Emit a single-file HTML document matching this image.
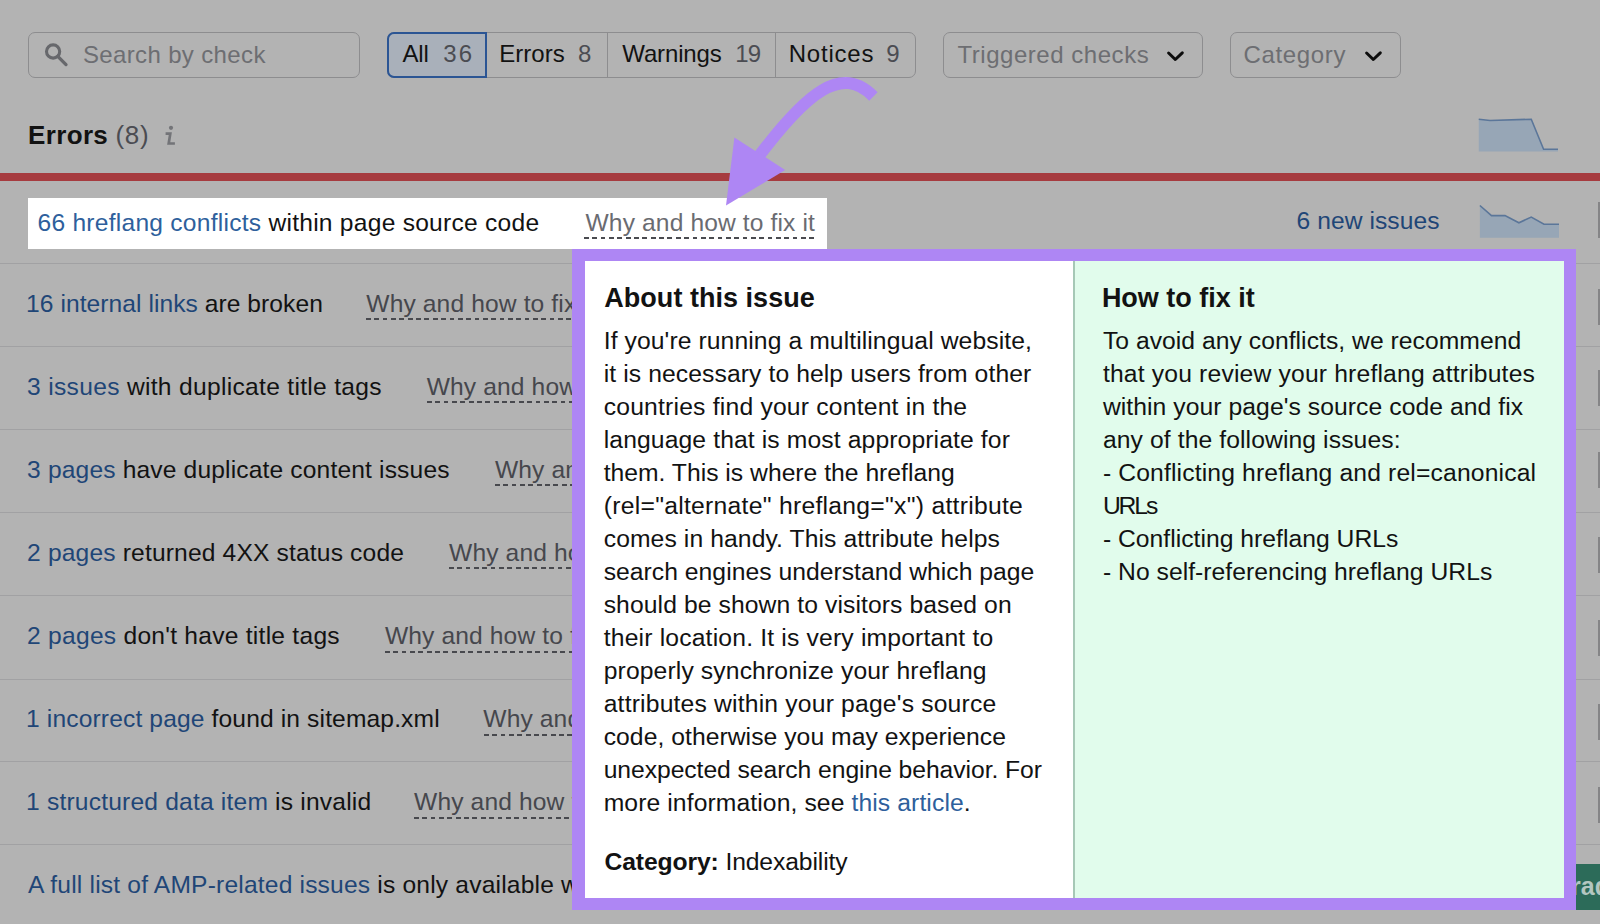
<!DOCTYPE html>
<html><head><meta charset="utf-8">
<style>
*{margin:0;padding:0;box-sizing:border-box}
html,body{width:1600px;height:924px;overflow:hidden;background:#b3b3b3;font-family:"Liberation Sans",sans-serif;color:#121212}
.abs{position:absolute}
.tx{position:absolute;white-space:nowrap;z-index:1}
.tp{z-index:6}
.box{position:absolute;border:1px solid #8d8d8f;border-radius:7px}
.sep{position:absolute;left:0;width:1600px;height:1px;background:#a1a1a3}
.dash{position:absolute;height:2px;background:repeating-linear-gradient(90deg,#48494e 0 4.75px,transparent 4.75px 8.35px)}
.pop{position:absolute;left:572px;top:249px;width:1004px;height:661px;background:#ae86f4;z-index:5}
.popL{position:absolute;left:585px;top:261px;width:488px;height:637px;background:#fff;z-index:5}
.popD{position:absolute;left:1073px;top:261px;width:2px;height:637px;background:#a6c8b6;z-index:5}
.popR{position:absolute;left:1075px;top:261px;width:489px;height:637px;background:#e1fcec;z-index:5}
</style></head><body>

<!-- search -->
<div class="box" style="left:28px;top:32px;width:332px;height:46px"></div>
<svg class="abs" style="left:40px;top:40px" width="32" height="32" viewBox="0 0 32 32"><circle cx="13.1" cy="11.5" r="6.6" fill="none" stroke="#67686c" stroke-width="3.1"/><line x1="17.8" y1="16.3" x2="26" y2="24.6" stroke="#67686c" stroke-width="3.3" stroke-linecap="round"/></svg>

<!-- segmented -->
<div class="box" style="left:387px;top:32px;width:529px;height:46px"></div>
<div class="abs" style="left:387px;top:32px;width:100px;height:46px;background:#a9b0ba;border:2px solid #2b5594;border-radius:7px 0 0 7px"></div>
<div class="abs" style="left:607px;top:33px;width:1px;height:44px;background:#8d8d8f"></div>
<div class="abs" style="left:775px;top:33px;width:1px;height:44px;background:#8d8d8f"></div>

<!-- dropdowns -->
<div class="box" style="left:943px;top:32px;width:260px;height:46px"></div>
<svg class="abs" style="left:1165px;top:46px" width="20" height="18" viewBox="0 0 20 18"><polyline points="3.6,7 10.3,13.5 17.3,6.8" fill="none" stroke="#0d0d0d" stroke-width="3" stroke-linecap="round" stroke-linejoin="round"/></svg>
<div class="box" style="left:1230px;top:32px;width:171px;height:46px"></div>
<svg class="abs" style="left:1363px;top:46px" width="20" height="18" viewBox="0 0 20 18"><polyline points="3.6,7 10.3,13.5 17.3,6.8" fill="none" stroke="#0d0d0d" stroke-width="3" stroke-linecap="round" stroke-linejoin="round"/></svg>

<!-- info i -->
<svg class="abs" style="left:160px;top:120px" width="22" height="30" viewBox="0 0 22 30"><circle cx="11" cy="7.8" r="2.1" fill="#737478"/><path d="M5.6 13.6 L10.3 13.6 L8.7 23.5 L14.9 23.5" fill="none" stroke="#737478" stroke-width="2.7" stroke-linejoin="miter"/></svg>

<!-- chart 1 -->
<svg class="abs" style="left:1470px;top:110px" width="100" height="50" viewBox="1470 110 100 50"><path d="M1478.75 9.25 L1490 10.5 L1531.25 9.25 L1543.6 39.25 L1558 39.25 L1558 41.5 L1478.75 41.5 Z" transform="translate(0,110)" fill="#97a6b6"/><polyline points="1478.75,119.25 1490,120.5 1531.25,119.25 1543.6,149.25 1558,149.25" fill="none" stroke="#5b7699" stroke-width="1.6"/></svg>

<!-- red line -->
<div class="abs" style="left:0;top:173px;width:1600px;height:8px;background:#a63b3f"></div>

<!-- row 1 -->
<div class="abs" style="left:28px;top:198px;width:799px;height:51px;background:#fff"></div>
<div class="dash" style="left:584px;top:236.8px;width:232px;background:repeating-linear-gradient(90deg,#4a4b50 0 4.75px,transparent 4.75px 8.35px)"></div>
<svg class="abs" style="left:1470px;top:195px" width="100" height="50" viewBox="1470 195 100 50"><path d="M1479.9 205.5 L1491.5 215.6 L1505 215.6 L1518.9 222.75 L1531.25 217.1 L1544 224.25 L1559 224.25 L1559 237.75 L1479.9 237.75 Z" fill="#97a6b6"/><polyline points="1479.9,205.5 1491.5,215.6 1505,215.6 1518.9,222.75 1531.25,217.1 1544,224.25 1559,224.25" fill="none" stroke="#5b7699" stroke-width="1.6"/></svg>

<div class="sep" style="top:263px"></div>
<div class="sep" style="top:346px"></div>
<div class="sep" style="top:429px"></div>
<div class="sep" style="top:512px"></div>
<div class="sep" style="top:595px"></div>
<div class="sep" style="top:679px"></div>
<div class="sep" style="top:761px"></div>
<div class="sep" style="top:844px"></div>

<div class="dash" style="left:366px;top:318px;width:210px"></div>
<div class="dash" style="left:427px;top:401px;width:150px"></div>
<div class="dash" style="left:495px;top:484px;width:80px"></div>
<div class="dash" style="left:449px;top:567px;width:130px"></div>
<div class="dash" style="left:385px;top:651px;width:190px"></div>
<div class="dash" style="left:484px;top:734px;width:95px"></div>
<div class="dash" style="left:414px;top:817px;width:165px"></div>

<div class="abs" style="left:1598px;top:202px;width:2px;height:36px;background:#858587"></div>
<div class="abs" style="left:1598px;top:289px;width:2px;height:36px;background:#858587"></div>
<div class="abs" style="left:1598px;top:370px;width:2px;height:36px;background:#858587"></div>
<div class="abs" style="left:1598px;top:452px;width:2px;height:36px;background:#858587"></div>
<div class="abs" style="left:1598px;top:537px;width:2px;height:36px;background:#858587"></div>
<div class="abs" style="left:1598px;top:620px;width:2px;height:36px;background:#858587"></div>
<div class="abs" style="left:1598px;top:704px;width:2px;height:36px;background:#858587"></div>
<div class="abs" style="left:1598px;top:787px;width:2px;height:36px;background:#858587"></div>
<!-- teal button -->
<div class="abs" style="left:1576px;top:864px;width:30px;height:46px;background:#2c6b59;overflow:hidden"><span style="position:absolute;left:-5px;top:7px;font-size:25px;line-height:30px;color:#b3c7c0;font-weight:700">rad</span></div>

<!-- popup -->
<div class="pop"></div>
<div class="popL"></div>
<div class="popD"></div>
<div class="popR"></div>

<div id="s1" class="tx" style="left:82.90px;top:38.81px;font-size:24.00px;line-height:31px;font-weight:400;color:#6d6e72;letter-spacing:0.364px">Search by check</div>
<div id="g1" class="tx" style="left:402.50px;top:37.91px;font-size:24.00px;line-height:31px;font-weight:400;color:#121212;letter-spacing:-0.200px">All</div>
<div id="g2" class="tx" style="left:443.30px;top:37.91px;font-size:24.00px;line-height:31px;font-weight:400;color:#4b4c52;letter-spacing:2.000px">36</div>
<div id="g3" class="tx" style="left:499.30px;top:37.91px;font-size:24.00px;line-height:31px;font-weight:400;color:#121212;letter-spacing:0.020px">Errors</div>
<div id="g4" class="tx" style="left:577.90px;top:37.91px;font-size:24.00px;line-height:31px;font-weight:400;color:#4b4c52;letter-spacing:4.400px">8</div>
<div id="g5" class="tx" style="left:622.30px;top:37.91px;font-size:24.00px;line-height:31px;font-weight:400;color:#121212;letter-spacing:-0.143px">Warnings</div>
<div id="g6" class="tx" style="left:735.30px;top:37.91px;font-size:24.00px;line-height:31px;font-weight:400;color:#4b4c52;letter-spacing:-0.900px">19</div>
<div id="g7" class="tx" style="left:788.70px;top:37.91px;font-size:24.00px;line-height:31px;font-weight:400;color:#121212;letter-spacing:0.783px">Notices</div>
<div id="g8" class="tx" style="left:886.30px;top:37.91px;font-size:24.00px;line-height:31px;font-weight:400;color:#4b4c52;letter-spacing:3.200px">9</div>
<div id="d1" class="tx" style="left:957.50px;top:38.51px;font-size:24.00px;line-height:31px;font-weight:400;color:#6d6e72;letter-spacing:0.533px">Triggered checks</div>
<div id="d2" class="tx" style="left:1243.50px;top:38.51px;font-size:24.00px;line-height:31px;font-weight:400;color:#6d6e72;letter-spacing:0.643px">Category</div>
<div id="h1" class="tx" style="left:28.10px;top:117.76px;font-size:26.00px;line-height:34px;font-weight:700;color:#121212;letter-spacing:0.340px">Errors</div>
<div id="h2" class="tx" style="left:115.50px;top:117.76px;font-size:26.00px;line-height:34px;font-weight:400;color:#4b4c52;letter-spacing:0.650px">(8)</div>
<div id="r1" class="tx" style="left:37.50px;top:206.82px;font-size:24.60px;line-height:32px;font-weight:400;color:#121212;letter-spacing:0.244px"><span style="color:#2e5f9c">66 hreflang conflicts</span> within page source code</div>
<div id="r1w" class="tx" style="left:585.50px;top:206.82px;font-size:24.60px;line-height:32px;font-weight:400;color:#6a6b71;letter-spacing:0.125px">Why and how to fix it</div>
<div id="r1n" class="tx" style="left:1296.50px;top:204.90px;font-size:24.60px;line-height:32px;font-weight:400;color:#1f4677;letter-spacing:0.073px">6 new issues</div>
<div id="r2" class="tx" style="left:26.10px;top:288.20px;font-size:24.60px;line-height:32px;font-weight:400;color:#121212;letter-spacing:0.052px"><span style="color:#1f4677">16 internal links</span> are broken</div>
<div id="r2w" class="tx" style="left:366.30px;top:288.20px;font-size:24.60px;line-height:32px;font-weight:400;color:#46474d;letter-spacing:0.125px">Why and how to fix it</div>
<div id="r3" class="tx" style="left:27.10px;top:371.20px;font-size:24.60px;line-height:32px;font-weight:400;color:#121212;letter-spacing:0.303px"><span style="color:#1f4677">3 issues</span> with duplicate title tags</div>
<div id="r3w" class="tx" style="left:426.70px;top:371.20px;font-size:24.60px;line-height:32px;font-weight:400;color:#46474d;letter-spacing:0.125px">Why and how to fix it</div>
<div id="r4" class="tx" style="left:27.10px;top:454.20px;font-size:24.60px;line-height:32px;font-weight:400;color:#121212;letter-spacing:0.150px"><span style="color:#1f4677">3 pages</span> have duplicate content issues</div>
<div id="r4w" class="tx" style="left:494.90px;top:454.20px;font-size:24.60px;line-height:32px;font-weight:400;color:#46474d;letter-spacing:0.125px">Why and how to fix it</div>
<div id="r5" class="tx" style="left:27.10px;top:537.20px;font-size:24.60px;line-height:32px;font-weight:400;color:#121212;letter-spacing:0.158px"><span style="color:#1f4677">2 pages</span> returned 4XX status code</div>
<div id="r5w" class="tx" style="left:449.10px;top:537.20px;font-size:24.60px;line-height:32px;font-weight:400;color:#46474d;letter-spacing:0.125px">Why and how to fix it</div>
<div id="r6" class="tx" style="left:27.10px;top:620.20px;font-size:24.60px;line-height:32px;font-weight:400;color:#121212;letter-spacing:0.250px"><span style="color:#1f4677">2 pages</span> don't have title tags</div>
<div id="r6w" class="tx" style="left:384.90px;top:620.20px;font-size:24.60px;line-height:32px;font-weight:400;color:#46474d;letter-spacing:0.125px">Why and how to fix it</div>
<div id="r7" class="tx" style="left:26.10px;top:703.20px;font-size:24.60px;line-height:32px;font-weight:400;color:#121212;letter-spacing:0.133px"><span style="color:#1f4677">1 incorrect page</span> found in sitemap.xml</div>
<div id="r7w" class="tx" style="left:483.30px;top:703.20px;font-size:24.60px;line-height:32px;font-weight:400;color:#46474d;letter-spacing:0.125px">Why and how to fix it</div>
<div id="r8" class="tx" style="left:26.10px;top:786.20px;font-size:24.60px;line-height:32px;font-weight:400;color:#121212;letter-spacing:0.188px"><span style="color:#1f4677">1 structured data item</span> is invalid</div>
<div id="r8w" class="tx" style="left:414.10px;top:786.20px;font-size:24.60px;line-height:32px;font-weight:400;color:#46474d;letter-spacing:0.125px">Why and how to fix it</div>
<div id="r9" class="tx" style="left:28.10px;top:869.01px;font-size:24.60px;line-height:32px;font-weight:400;color:#121212;letter-spacing:0.180px"><span style="color:#1f4677">A full list of AMP-related issues</span> is only available with a subscription</div>
<div id="ph1" class="tx tp" style="left:604.30px;top:280.90px;font-size:27.00px;line-height:35px;font-weight:700;color:#121212;letter-spacing:0.027px">About this issue</div>
<div id="ph2" class="tx tp" style="left:1101.90px;top:281.00px;font-size:27.00px;line-height:35px;font-weight:700;color:#121212;letter-spacing:-0.017px">How to fix it</div>
<div id="pl0" class="tx tp" style="left:603.70px;top:325.00px;font-size:24.70px;line-height:32px;font-weight:400;color:#121212;letter-spacing:0.088px">If you're running a multilingual website,</div>
<div id="pl1" class="tx tp" style="left:603.70px;top:358.00px;font-size:24.70px;line-height:32px;font-weight:400;color:#121212;letter-spacing:0.092px">it is necessary to help users from other</div>
<div id="pl2" class="tx tp" style="left:603.70px;top:391.00px;font-size:24.70px;line-height:32px;font-weight:400;color:#121212;letter-spacing:0.200px">countries find your content in the</div>
<div id="pl3" class="tx tp" style="left:603.70px;top:424.00px;font-size:24.70px;line-height:32px;font-weight:400;color:#121212;letter-spacing:0.114px">language that is most appropriate for</div>
<div id="pl4" class="tx tp" style="left:603.70px;top:457.00px;font-size:24.70px;line-height:32px;font-weight:400;color:#121212;letter-spacing:0.003px">them. This is where the hreflang</div>
<div id="pl5" class="tx tp" style="left:603.70px;top:490.00px;font-size:24.70px;line-height:32px;font-weight:400;color:#121212;letter-spacing:0.277px">(rel=&quot;alternate&quot; hreflang=&quot;x&quot;) attribute</div>
<div id="pl6" class="tx tp" style="left:603.70px;top:523.00px;font-size:24.70px;line-height:32px;font-weight:400;color:#121212;letter-spacing:0.094px">comes in handy. This attribute helps</div>
<div id="pl7" class="tx tp" style="left:603.70px;top:556.00px;font-size:24.70px;line-height:32px;font-weight:400;color:#121212;letter-spacing:0.029px">search engines understand which page</div>
<div id="pl8" class="tx tp" style="left:603.70px;top:589.00px;font-size:24.70px;line-height:32px;font-weight:400;color:#121212;letter-spacing:0.089px">should be shown to visitors based on</div>
<div id="pl9" class="tx tp" style="left:603.70px;top:622.00px;font-size:24.70px;line-height:32px;font-weight:400;color:#121212;letter-spacing:0.176px">their location. It is very important to</div>
<div id="pl10" class="tx tp" style="left:603.70px;top:655.00px;font-size:24.70px;line-height:32px;font-weight:400;color:#121212;letter-spacing:0.124px">properly synchronize your hreflang</div>
<div id="pl11" class="tx tp" style="left:603.70px;top:688.00px;font-size:24.70px;line-height:32px;font-weight:400;color:#121212;letter-spacing:0.180px">attributes within your page's source</div>
<div id="pl12" class="tx tp" style="left:603.70px;top:721.00px;font-size:24.70px;line-height:32px;font-weight:400;color:#121212;letter-spacing:0.048px">code, otherwise you may experience</div>
<div id="pl13" class="tx tp" style="left:603.70px;top:754.00px;font-size:24.70px;line-height:32px;font-weight:400;color:#121212;letter-spacing:-0.062px">unexpected search engine behavior. For</div>
<div id="pl14" class="tx tp" style="left:603.70px;top:787.00px;font-size:24.70px;line-height:32px;font-weight:400;color:#121212;letter-spacing:0.099px">more information, see <span style="color:#2e5f9c">this article</span>.</div>
<div id="pcat" class="tx tp" style="left:604.50px;top:846.00px;font-size:24.70px;line-height:32px;font-weight:400;color:#121212;letter-spacing:-0.119px"><b>Category:</b> Indexability</div>
<div id="pr0" class="tx tp" style="left:1102.90px;top:325.00px;font-size:24.70px;line-height:32px;font-weight:400;color:#121212;letter-spacing:0.034px">To avoid any conflicts, we recommend</div>
<div id="pr1" class="tx tp" style="left:1102.90px;top:358.00px;font-size:24.70px;line-height:32px;font-weight:400;color:#121212;letter-spacing:0.169px">that you review your hreflang attributes</div>
<div id="pr2" class="tx tp" style="left:1102.90px;top:391.00px;font-size:24.70px;line-height:32px;font-weight:400;color:#121212;letter-spacing:0.065px">within your page's source code and fix</div>
<div id="pr3" class="tx tp" style="left:1102.90px;top:424.00px;font-size:24.70px;line-height:32px;font-weight:400;color:#121212;letter-spacing:0.096px">any of the following issues:</div>
<div id="pr4" class="tx tp" style="left:1102.90px;top:457.00px;font-size:24.70px;line-height:32px;font-weight:400;color:#121212;letter-spacing:0.144px">- Conflicting hreflang and rel=canonical</div>
<div id="pr5" class="tx tp" style="left:1102.90px;top:490.00px;font-size:24.70px;line-height:32px;font-weight:400;color:#121212;letter-spacing:-2.133px">URLs</div>
<div id="pr6" class="tx tp" style="left:1102.90px;top:523.00px;font-size:24.70px;line-height:32px;font-weight:400;color:#121212;letter-spacing:0.019px">- Conflicting hreflang URLs</div>
<div id="pr7" class="tx tp" style="left:1102.90px;top:556.00px;font-size:24.70px;line-height:32px;font-weight:400;color:#121212;letter-spacing:0.032px">- No self-referencing hreflang URLs</div>

<!-- arrow -->
<svg class="abs" style="left:0;top:0;z-index:8" width="1600" height="924" viewBox="0 0 1600 924">
<path d="M873.4 96.5 C842 64.5 807.6 90.6 755.3 160.9" fill="none" stroke="#ae86f4" stroke-width="11.8"/>
<polygon points="726,205.6 734.4,137.4 785.2,170" fill="#ae86f4"/>
</svg>
</body></html>
